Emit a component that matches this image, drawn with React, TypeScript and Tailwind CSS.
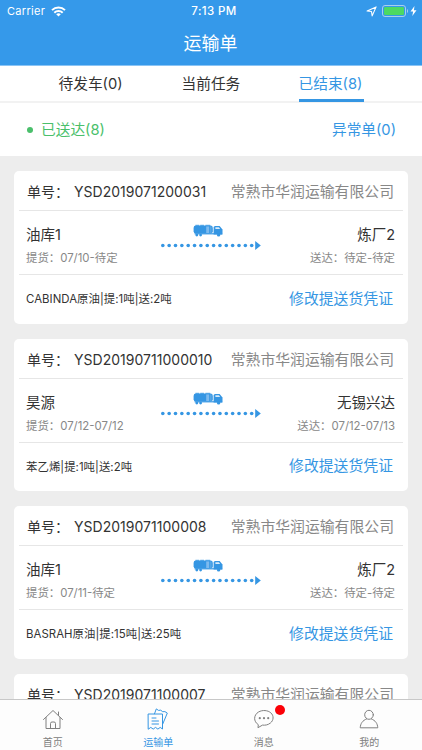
import type { ReactNode } from "react";

interface Order {
  no: string;
  from: string;
  pickup: string;
  to: string;
  arrive: string;
  goods: string;
}

const company = "常熟市华润运输有限公司";

const orders: Order[] = [
  { no: "YSD2019071200031", from: "油库1", pickup: "07/10-待定", to: "炼厂2", arrive: "待定-待定", goods: "CABINDA原油|提:1吨|送:2吨" },
  { no: "YSD20190711000010", from: "昊源", pickup: "07/12-07/12", to: "无锡兴达", arrive: "07/12-07/13", goods: "苯乙烯|提:1吨|送:2吨" },
  { no: "YSD2019071100008", from: "油库1", pickup: "07/11-待定", to: "炼厂2", arrive: "待定-待定", goods: "BASRAH原油|提:15吨|送:25吨" },
  { no: "YSD2019071100007", from: "油库1", pickup: "07/11-待定", to: "炼厂2", arrive: "待定-待定", goods: "BASRAH原油|提:15吨|送:25吨" },
];

function StatusBar() {
  return (
    <div className="flex h-[22px] items-center justify-between pl-[7px] pr-[5px] text-[11px] text-white">
      <div className="flex w-[120px] items-center gap-[6px]">
        <span className="tracking-[0.3px]">Carrier</span>
        <svg width="15" height="11" viewBox="0 0 15 11" fill="none" stroke="white" strokeWidth="2">
          <path d="M1 4.1a9.3 9.3 0 0 1 13 0" />
          <path d="M3.3 6.7a6 6 0 0 1 8.4 0" />
          <path d="M5.2 8.3a3.3 3.3 0 0 1 4.6 0L7.5 10.6z" fill="white" stroke="none" />
        </svg>
      </div>
      <span className="pl-1 pt-[2px] text-[11.5px] font-medium tracking-[0.4px]">7:13 PM</span>
      <div className="flex w-[120px] items-center justify-end">
        <svg width="11" height="11" viewBox="0 0 10 10" fill="none" stroke="white" strokeWidth="1" strokeLinejoin="round">
          <path d="M9.2 0.8 5.6 9 5 5 1 4.6z" />
        </svg>
        <svg className="ml-[5px]" width="27" height="12" viewBox="0 0 27 12">
          <rect x="0.5" y="0.5" width="23" height="11" rx="2.5" fill="none" stroke="#a9cfee" />
          <rect x="2" y="2" width="20" height="8" rx="1.2" fill="#4cd964" />
          <path d="M25 4v4c1.4-.5 1.4-3.5 0-4z" fill="#a9cfee" />
        </svg>
        <svg className="ml-[1px]" width="7" height="10" viewBox="0 0 7 10" fill="white">
          <path d="M4.5 0 0.5 5.6h2.6L2.3 10 6.5 4.2H3.9z" />
        </svg>
      </div>
    </div>
  );
}

function Route() {
  return (
    <svg width="102" height="30" viewBox="0 0 102 30" fill="#3596e3">
      <g transform="translate(0.6 0.4)">
        {/* tank */}
        <rect x="33" y="3.2" width="19.2" height="8" rx="2.4" />
        <path d="M35.200 2.900h3M40 2.900h3M45.200 2.900h4" stroke="#3596e3" strokeWidth="0.9" strokeLinecap="round" />
        <rect x="45.6" y="4" width="3" height="6.6" fill="#7dbaee" />
        <path d="M50.3 4v6.6" stroke="#8fc4f0" strokeWidth="0.6" />
        {/* cab */}
        <path d="M53 12V5.200q0-1.700 1.700-1.700h4.300l2.900 3.700v4.800z" />
        <path d="M54.8 4.800h3.500l1.200 1.700h-4.700z" fill="#d9ebfa" />
        <rect x="34" y="10.8" width="27.500" height="1.2" />
        <circle cx="36.200" cy="12.7" r="1.4" />
        <circle cx="40" cy="12.7" r="1.4" />
        <circle cx="58" cy="12.5" r="1.7" />
      </g>
      {/* dotted arrow */}
      {Array.from({ length: 15 }, (_, i) => (
        <circle key={i} cx={2.8 + i * 6.35} cy="23.5" r="1.8" />
      ))}
      <path d="M95.2 19v9l5.6-4.5z" />
    </svg>
  );
}

function OrderCard({ order }: { order: Order }) {
  return (
    <div className="h-[152.5px] shrink-0 rounded-[5px] bg-white px-[5px] text-[#333]">
      <div className="flex h-[40px] items-center justify-between border-b border-[#e6e6e6] pl-2 pr-[9px] pt-[2px]">
        <div className="flex items-center text-[14px]">
          <span className="w-[47px]">单号：</span>
          <span className="tracking-[0.02px]">{order.no}</span>
        </div>
        <span className="pt-[2px] text-[14.85px] text-[#888]">{company}</span>
      </div>
      <div className="flex h-[64px] justify-between border-b border-[#e6e6e6] pl-[7px] pr-2">
        <div className="flex w-[134px] flex-col pt-[14px]">
          <span className="text-[14.5px] leading-[20px]">{order.from}</span>
          <span className="mt-[5px] text-[11.4px] leading-[16px] text-[#888]">提货：{order.pickup}</span>
        </div>
        <div className="pt-[11px]">
          <Route />
        </div>
        <div className="flex w-[134px] flex-col pt-[14px] text-right">
          <span className="text-[14.5px] leading-[20px]">{order.to}</span>
          <span className="mt-[5px] text-[11.4px] leading-[16px] text-[#888]">送达：{order.arrive}</span>
        </div>
      </div>
      <div className="flex h-[48px] items-center justify-between pl-[7px] pr-[10px]">
        <span className="pt-[2px] text-[11.4px] tracking-[0.05px]">{order.goods}</span>
        <span className="text-[14.85px] text-[#3596e3]">修改提送货凭证</span>
      </div>
    </div>
  );
}

function NavItem({ label, active, dot, children }: { label: string; active?: boolean; dot?: boolean; children: ReactNode }) {
  return (
    <div className={`flex flex-1 flex-col items-center pt-2 ${active ? "text-[#3596e3]" : "text-[#808080]"}`}>
      <div className="relative h-[24px] w-[22px]">
        <svg width="22" height="24" viewBox="0 0 22 24" fill="none" stroke="currentColor" strokeWidth="1" strokeLinejoin="round" strokeLinecap="round">
          {children}
        </svg>
        {dot && <span className="absolute left-[22px] top-[-3px] size-[10px] rounded-full bg-[#fb0007]" />}
      </div>
      <span className="mt-[2px] text-[10px] leading-[16px]">{label}</span>
    </div>
  );
}

export default function App() {
  return (
    <div className="flex h-[750px] w-[422px] flex-col overflow-hidden bg-[#ededed] font-['Inter','Noto_Sans_CJK_SC',sans-serif]">
      <header className="h-[66px] shrink-0 border-b border-[#8ac4f5] bg-[#3599ea]">
        <StatusBar />
        <h1 className="pr-px text-center text-[18px] leading-[43px] text-white">运输单</h1>
      </header>
      <nav className="flex h-[37px] shrink-0 justify-center gap-[57px] border-b-2 border-[#f2f2f2] bg-white text-[14.7px] text-[#333]">
        <span className="w-[66px] whitespace-nowrap leading-[36px]">待发车(0)</span>
        <span className="w-[60px] whitespace-nowrap leading-[36px]">当前任务</span>
        <span className="h-[36px] w-[65px] whitespace-nowrap border-b-3 border-[#3596e3] leading-[36px] text-[#3596e3]">已结束(8)</span>
      </nav>
      <div className="flex h-[53px] shrink-0 items-center justify-between bg-white pl-[27px] pr-[26px] pt-px text-[14.7px]">
        <div className="flex items-center gap-2 text-[#4abf6b]">
          <span className="size-[6px] rounded-full bg-[#4abf6b]" />
          已送达(8)
        </div>
        <span className="text-[#3596e3]">异常单(0)</span>
      </div>
      <main className="flex min-h-0 flex-1 flex-col gap-[15px] overflow-hidden px-[14px] pt-[15px]">
        {orders.map((order) => (
          <OrderCard key={order.no} order={order} />
        ))}
      </main>
      <footer className="flex h-[51px] shrink-0 border-t border-[#c8c8c8] bg-[#fdfdfd]">
        <NavItem label="首页">
          <path d="M1.5 11.5 11 2.5l9.500 9M4 9.500V20.500h14V9.500M16.500 7.500V4" />
          <path d="M8.5 20.500v-5q0-1.500 1.500-1.500h2q1.500 0 1.500 1.500v5" />
        </NavItem>
        <NavItem label="运输单" active>
          <path d="M1.500 6h14v15l-2.300-1.600-2.300 1.700-2.400-1.700-2.300 1.700-2.400-1.700L1.500 21z" />
          <path d="M7.500 5.800 9.300.9l2.200 1.500 2.200-.2 2 1.500 2.200-.1 2.400 1.500-4.600 11" />
          <path d="M5 10h4M5 13h6.500M5 16h6.500" />
        </NavItem>
        <NavItem label="消息" dot>
          <path d="M5 16.5C.3 13.500.5 7 5.500 4c4-2.300 9.300-1.800 12.300.8 3.200 2.900 3 7.600-.5 10.300-2.400 1.900-5.200 2.300-7.800 2L5.300 19.500z" />
          <g fill="currentColor" stroke="none">
            <circle cx="6.800" cy="10.200" r="1.100" />
            <circle cx="11" cy="10.200" r="1.100" />
            <circle cx="15.200" cy="10.200" r="1.100" />
          </g>
        </NavItem>
        <NavItem label="我的">
          <ellipse cx="11" cy="6.800" rx="4.300" ry="4.500" />
          <path d="M8.500 11C4.500 12.500 2.500 15.500 2.200 19.800h17.600c-.3-4.300-2.300-7.300-6.300-8.800" />
        </NavItem>
      </footer>
    </div>
  );
}
